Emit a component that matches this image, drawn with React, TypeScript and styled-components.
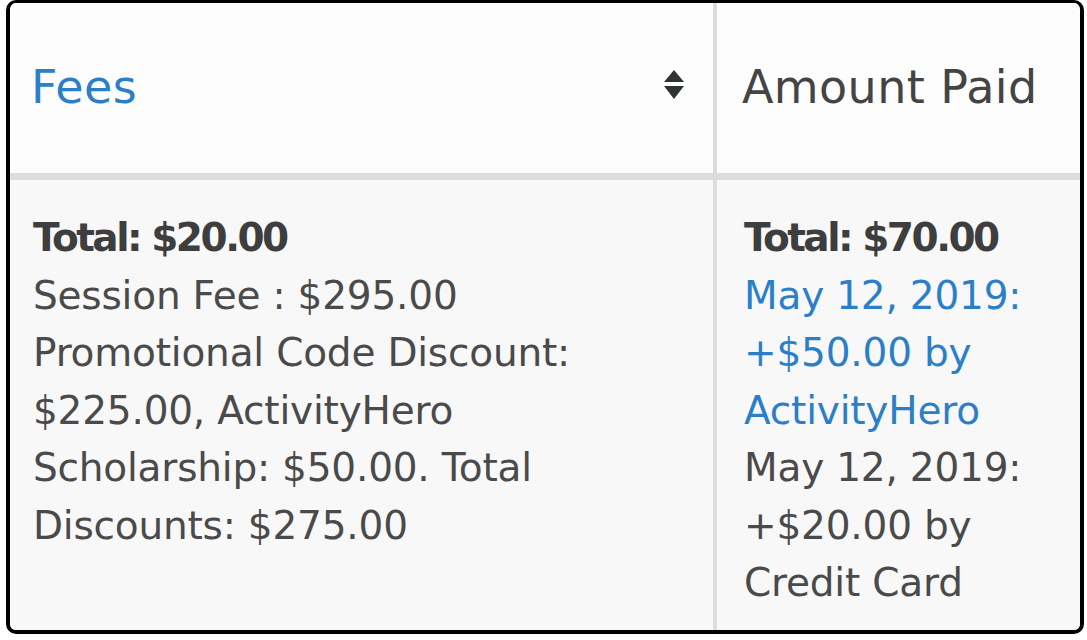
import React from 'react';
import styled, { createGlobalStyle } from 'styled-components';

const GlobalStyle = createGlobalStyle`
  html, body {
    margin: 0;
    padding: 0;
    background: #ffffff;
  }
  body {
    font-family: 'DejaVu Sans', 'Liberation Sans', sans-serif;
  }
`;

const Frame = styled.div`
  box-sizing: border-box;
  width: 1078px;
  height: 634px;
  margin-left: 6px;
  border: 4px solid #000;
  border-top-width: 3px;
  border-radius: 10px;
  overflow: hidden;
  display: grid;
  grid-template-columns: 707px 1fr;
  grid-template-rows: 177px 1fr;
  color: #454545;
`;

const HeadCell = styled.div<{ $last?: boolean }>`
  display: flex;
  align-items: center;
  justify-content: space-between;
  padding: 0 28px 0 ${(p) => (p.$last ? '25px' : '21px')};
  background: #fdfdfd;
  border-bottom: 7px solid #dcdcdc;
  border-right: ${(p) => (p.$last ? 'none' : '4px solid #dcdcdc')};
  font-size: 46px;
  letter-spacing: 0.4px;
`;

const HeadLabel = styled.span<{ $link?: boolean }>`
  color: ${(p) => (p.$link ? '#2b7fc8' : '#444444')};
  margin-top: -2px;
`;

const SortIcon = styled.svg`
  width: 22px;
  height: 32px;
  margin-top: -6px;
`;

const BodyCell = styled.div<{ $last?: boolean }>`
  background: #f8f8f8;
  border-right: ${(p) => (p.$last ? 'none' : '4px solid #dcdcdc')};
  padding: 29px 20px 0 ${(p) => (p.$last ? '27px' : '23px')};
  font-size: 39px;
  line-height: 57.5px;
`;

const Line = styled.div<{ $bold?: boolean; $link?: boolean }>`
  white-space: nowrap;
  font-weight: ${(p) => (p.$bold ? 700 : 400)};
  color: ${(p) => (p.$link ? '#2b7fc8' : p.$bold ? '#3e3e3e' : '#4a4a4a')};
  letter-spacing: ${(p) => (p.$bold ? '-2.5px' : '-0.2px')};
`;

const feeLines = [
  'Session Fee : $295.00',
  'Promotional Code Discount:',
  '$225.00, ActivityHero',
  'Scholarship: $50.00. Total',
  'Discounts: $275.00',
];

const payments = [
  { lines: ['May 12, 2019:', '+$50.00 by', 'ActivityHero'], link: true },
  { lines: ['May 12, 2019:', '+$20.00 by', 'Credit Card'], link: false },
];

const App = (): JSX.Element => {
  return (
    <>
      <GlobalStyle />
      <Frame>
        <HeadCell>
          <HeadLabel $link>Fees</HeadLabel>
          <SortIcon viewBox="0 0 22 32">
            <path d="M11 1 L21 13 H1 Z" fill="#2f3333" />
            <path d="M1 17 H21 L11 30 Z" fill="#2f3333" />
          </SortIcon>
        </HeadCell>
        <HeadCell $last>
          <HeadLabel>Amount Paid</HeadLabel>
        </HeadCell>
        <BodyCell>
          <Line $bold>Total: $20.00</Line>
          {feeLines.map((l) => (
            <Line key={l}>{l}</Line>
          ))}
        </BodyCell>
        <BodyCell $last>
          <Line $bold>Total: $70.00</Line>
          {payments.map((p, i) =>
            p.lines.map((l) => (
              <Line key={`${i}-${l}`} $link={p.link}>
                {l}
              </Line>
            ))
          )}
        </BodyCell>
      </Frame>
    </>
  );
};

export default App;
